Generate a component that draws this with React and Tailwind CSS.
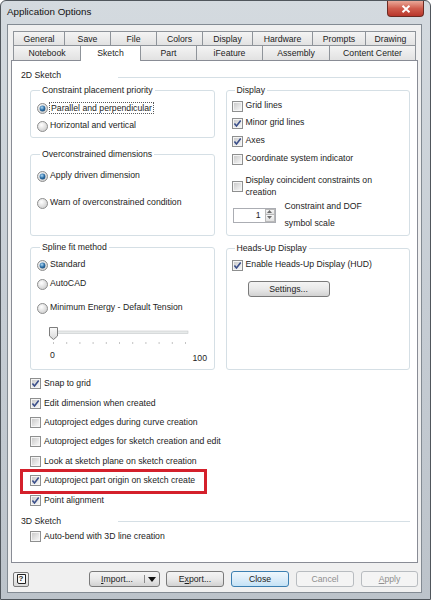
import React from 'react';

const tabsTop = [
  ['General', 'w-[52px]'],
  ['Save', 'w-[47px]'],
  ['File', 'w-[47px]'],
  ['Colors', 'w-[47px]'],
  ['Display', 'w-[51px]'],
  ['Hardware', 'w-[61px]'],
  ['Prompts', 'w-[54px]'],
  ['Drawing', 'w-[51px]'],
];

const tabsBottom = [
  ['Notebook', 'w-[68px]'],
  ['Sketch', 'w-[61px]'],
  ['Part', 'w-[57px]'],
  ['iFeature', 'w-[67px]'],
  ['Assembly', 'w-[68px]'],
  ['Content Center', 'w-[87px]'],
];

const sketchOptions = [
  ['Snap to grid', true],
  ['Edit dimension when created', true],
  ['Autoproject edges during curve creation', false],
  ['Autoproject edges for sketch creation and edit', false],
  ['Look at sketch plane on sketch creation', false],
  ['Autoproject part origin on sketch create', true],
  ['Point alignment', true],
];

function CheckBox({ checked }) {
  return (
    <svg width="11" height="11" viewBox="0 0 11 11" className="shrink-0">
      <defs>
        <linearGradient id="cbfill" x1="0" y1="0" x2="1" y2="1">
          <stop offset="0" stopColor="#cbcbcb" />
          <stop offset="1" stopColor="#f6f6f6" />
        </linearGradient>
      </defs>
      <rect x="0.5" y="0.5" width="10" height="10" fill="#f5f5f5" stroke="#8e8f8f" />
      <rect x="2" y="2" width="7" height="7" fill="url(#cbfill)" />
      {checked && (
        <path d="M2.4 5.4 4.5 8 8.7 2.6" fill="none" stroke="#3b4f8a" strokeWidth="1.6" />
      )}
    </svg>
  );
}

function Radio({ on }) {
  return (
    <svg width="11" height="11" viewBox="0 0 11 11" className="shrink-0">
      <defs>
        <radialGradient id="rdfill" cx="0.4" cy="0.35" r="0.75">
          <stop offset="0" stopColor="#ffffff" />
          <stop offset="1" stopColor="#c9c9c9" />
        </radialGradient>
        <radialGradient id="rddot" cx="0.4" cy="0.35" r="0.75">
          <stop offset="0" stopColor="#b3dcf6" />
          <stop offset="0.55" stopColor="#2e70a8" />
          <stop offset="1" stopColor="#16466f" />
        </radialGradient>
      </defs>
      <circle cx="5.5" cy="5.5" r="5" fill="url(#rdfill)" stroke="#8e8f8f" />
      {on && <circle cx="5.5" cy="5.5" r="2.9" fill="url(#rddot)" />}
    </svg>
  );
}

function Group({ title, className = '', children }) {
  return (
    <div className={`border border-[#d5dfe5] rounded-[3px] ${className}`}>
      <div className="-mt-[7px] ml-[3px] w-fit px-[2px] h-[12px] leading-[12px] bg-white">{title}</div>
      {children}
    </div>
  );
}

function Button({ children, kind = 'normal', className = '' }) {
  const look =
    kind === 'focus'
      ? 'border-[#3c7fb1] bg-linear-to-b from-[#eef7fd] via-[#dcedf9] to-[#c4e2f6]'
      : kind === 'disabled'
        ? 'border-[#b8bcc0] bg-[#f4f4f4] text-[#8f8f8f]'
        : 'border-[#7a7a7a] bg-linear-to-b from-[#f4f4f4] via-[#e9e9e9] to-[#d2d2d2]';
  return (
    <div className={`h-[16px] flex items-center justify-center rounded-[3px] border leading-[14px] ${look} ${className}`}>
      {children}
    </div>
  );
}

function Slider() {
  const ticks = Array.from({ length: 11 }, (_, i) => 8 + i * 13.2);
  return (
    <svg width="150" height="22" viewBox="0 0 150 22" className="ml-[8px] mt-[11px]">
      <defs>
        <linearGradient id="thumb" x1="0" y1="0" x2="0" y2="1">
          <stop offset="0" stopColor="#fbfbfb" />
          <stop offset="1" stopColor="#d8d8d8" />
        </linearGradient>
      </defs>
      <rect x="5" y="6" width="138" height="2.5" fill="#e7eaea" stroke="#c5c8ca" strokeWidth="0.6" />
      {ticks.map((x) => (
        <rect key={x} x={x} y="17" width="1" height="2" fill="#c4c4c4" />
      ))}
      <path d="M4.5 2.5h8v8.5l-4 3.5-4-3.5z" fill="url(#thumb)" stroke="#7d7d7d" />
    </svg>
  );
}

export default function App() {
  return (
    <div className="w-[431px] h-[600px] flex flex-col border border-[#50565c] rounded-t-[6px] bg-linear-to-b from-[#d4dadf] via-[#c6cdd4] to-[#bcc3ca] pl-[6px] pr-[8px] pb-[6px] font-['Liberation_Sans',Arial,sans-serif] text-[8.7px] text-[#1c1c1c]">
      <div className="h-[23px] flex items-start justify-between -mr-[2px]">
        <div className="mt-[5px] text-[9.8px] leading-[12px] text-[#111]">Application Options</div>
        <div className="w-[37px] h-[16px] flex items-center justify-center rounded-b-[4px] border border-t-0 border-[#6b2a22] bg-linear-to-b from-[#e9a899] via-[#cf5c4d] to-[#b8352a]">
          <svg width="10" height="8" viewBox="0 0 10 8">
            <path d="M1.5 0.8 8.5 7.2M8.5 0.8 1.5 7.2" stroke="#ffffff" strokeWidth="1.9" />
          </svg>
        </div>
      </div>

      <div className="flex-1 flex flex-col border border-[#838b93] bg-[#f0f0f0] pt-[6px] pb-[5px]">
        <div className="ml-[5px] flex h-[14px]">
          {tabsTop.map(([label, w], i) => (
            <div
              key={label}
              className={`${w} ${i ? '-ml-px' : ''} h-[14px] flex items-center justify-center border border-b-0 border-[#8f949a] bg-linear-to-b from-[#f4f4f4] to-[#e2e2e2] leading-[12px]`}
            >
              {label}
            </div>
          ))}
        </div>
        <div className="ml-[5px] flex items-start h-[15px]">
          {tabsBottom.map(([label, w], i) => {
            const active = label === 'Sketch';
            return (
              <div
                key={label}
                className={`${w} ${i ? '-ml-px' : ''} ${
                  active
                    ? 'h-[16px] relative z-10 bg-white items-start pt-[1px]'
                    : 'h-[15px] bg-linear-to-b from-[#f4f4f4] to-[#e2e2e2] items-center'
                } flex justify-center border border-b-0 border-[#8f949a] leading-[12px]`}
              >
                {label}
              </div>
            );
          })}
        </div>

        <div className="h-[503px] mx-[3px] bg-white border border-[#898c95] pt-[8px] pl-[9px] pr-[7px]">
          <div className="h-[12px] flex items-center">
            <span className="leading-[12px]">2D Sketch</span>
            <div className="ml-auto mt-[4px] w-[292px] h-px bg-[#d5dfe5]" />
          </div>

          <div className="mt-[9px] ml-[9px] flex gap-[11px]">
            <div className="w-[185px] flex flex-col">
              <Group title="Constraint placement priority" className="h-[48px] pl-[6px]">
                <div className="mt-[6px] h-[12px] flex items-center gap-[2px]">
                  <Radio on />
                  <span className="-ml-[1px] px-[1px] leading-[10px] border border-dotted border-[#5a5a5a]">
                    Parallel and perpendicular
                  </span>
                </div>
                <div className="mt-[6px] h-[12px] flex items-center gap-[2px]">
                  <Radio />
                  <span>Horizontal and vertical</span>
                </div>
              </Group>

              <Group title="Overconstrained dimensions" className="mt-[16px] h-[82px] pl-[6px]">
                <div className="mt-[10px] h-[12px] flex items-center gap-[2px]">
                  <Radio on />
                  <span>Apply driven dimension</span>
                </div>
                <div className="mt-[15px] h-[12px] flex items-center gap-[2px]">
                  <Radio />
                  <span>Warn of overconstrained condition</span>
                </div>
              </Group>

              <Group title="Spline fit method" className="mt-[11px] h-[123px] pl-[6px]">
                <div className="mt-[6px] h-[12px] flex items-center gap-[2px]">
                  <Radio on />
                  <span>Standard</span>
                </div>
                <div className="mt-[7px] h-[12px] flex items-center gap-[2px]">
                  <Radio />
                  <span>AutoCAD</span>
                </div>
                <div className="mt-[12px] h-[12px] flex items-center gap-[2px]">
                  <Radio />
                  <span>Minimum Energy - Default Tension</span>
                </div>
                <Slider />
                <div className="mt-[2px] flex items-start w-[157px] ml-[13px]">
                  <span className="leading-[12px]">0</span>
                  <span className="ml-auto mt-[3px] leading-[12px]">100</span>
                </div>
              </Group>
            </div>

            <div className="w-[185px] flex flex-col">
              <Group title="Display" className="h-[146px] pl-[5px]">
                <div className="mt-[4px] h-[12px] flex items-center gap-[3px]">
                  <CheckBox />
                  <span>Grid lines</span>
                </div>
                <div className="mt-[5px] h-[12px] flex items-center gap-[3px]">
                  <CheckBox checked />
                  <span>Minor grid lines</span>
                </div>
                <div className="mt-[6px] h-[12px] flex items-center gap-[3px]">
                  <CheckBox checked />
                  <span>Axes</span>
                </div>
                <div className="mt-[6px] h-[12px] flex items-center gap-[3px]">
                  <CheckBox />
                  <span>Coordinate system indicator</span>
                </div>
                <div className="mt-[9px] flex items-center gap-[3px]">
                  <CheckBox />
                  <span className="leading-[12px]">
                    Display coincident constraints on
                    <br />
                    creation
                  </span>
                </div>
                <div className="flex items-center ml-[1px]">
                  <div className="flex w-[43px] h-[15px] border border-[#abadb3] bg-white">
                    <div className="flex-1 text-right pr-[4px] leading-[13px]">1</div>
                    <div className="w-[10px] flex flex-col">
                      <div className="h-[6.5px] flex items-center justify-center border border-[#b9b9b9] bg-linear-to-b from-[#f7f7f7] to-[#e0e0e0]">
                        <svg width="5" height="3" viewBox="0 0 5 3">
                          <path d="M0 3 2.5 0 5 3z" fill="#6c6c6c" />
                        </svg>
                      </div>
                      <div className="h-[6.5px] flex items-center justify-center border border-t-0 border-[#b9b9b9] bg-linear-to-b from-[#f7f7f7] to-[#e0e0e0]">
                        <svg width="5" height="3" viewBox="0 0 5 3">
                          <path d="M0 0 2.5 3 5 0z" fill="#6c6c6c" />
                        </svg>
                      </div>
                    </div>
                  </div>
                  <span className="ml-[9px] leading-[17px]">
                    Constraint and DOF
                    <br />
                    symbol scale
                  </span>
                </div>
              </Group>

              <Group title="Heads-Up Display" className="mt-[12px] h-[122px] pl-[5px]">
                <div className="mt-[5px] h-[12px] flex items-center gap-[3px]">
                  <CheckBox checked />
                  <span>Enable Heads-Up Display (HUD)</span>
                </div>
                <Button className="mt-[10px] ml-[16px] w-[82px]">Settings...</Button>
              </Group>
            </div>
          </div>

          <div className="mt-[4px] ml-[9px]">
            {sketchOptions.map(([label, on]) => (
              <div key={label} className="relative h-[19.4px] flex items-center gap-[3px]">
                <CheckBox checked={on} />
                <span>{label}</span>
                {label === 'Autoproject part origin on sketch create' && (
                  <div className="absolute -left-[10px] -top-[2px] w-[187px] h-[25px] border-[3px] border-[#d4202b]" />
                )}
              </div>
            ))}
          </div>

          <div className="mt-[5px] h-[12px] flex items-center">
            <span className="leading-[12px]">3D Sketch</span>
            <div className="ml-auto mt-[1px] w-[292px] h-px bg-[#d5dfe5]" />
          </div>
          <div className="ml-[9px] h-[19.4px] flex items-center gap-[3px]">
            <CheckBox />
            <span>Auto-bend with 3D line creation</span>
          </div>
        </div>

        <div className="mt-[8px] h-[16px] flex items-center pl-[5px] pr-[3px]">
          <div className="w-[16px] h-[15px] flex items-center justify-center rounded-[2px] border border-[#7a7a7a] bg-linear-to-b from-[#f6f6f6] to-[#d9d9d9]">
            <span className="w-[9px] h-[10px] flex items-center justify-center border border-[#222] bg-[#fafafa] rounded-bl-[2px] text-[8px] font-bold leading-[8px]">
              ?
            </span>
          </div>
          <div className="ml-auto flex items-center">
            <div className="w-[71px] h-[16px] flex rounded-[3px] border border-[#7a7a7a] bg-linear-to-b from-[#f4f4f4] via-[#e9e9e9] to-[#d2d2d2]">
              <div className="w-[54px] flex items-center justify-center leading-[14px]">
                <span>
                  <span className="underline">I</span>mport...
                </span>
              </div>
              <div className="my-[3px] w-px bg-[#8a8a8a]" />
              <div className="flex-1 flex items-center justify-center">
                <svg width="8" height="5" viewBox="0 0 8 5">
                  <path d="M0 0h8L4 5z" fill="#111" />
                </svg>
              </div>
            </div>
            <Button className="ml-[6px] w-[58px]">
              <span>
                E<span className="underline">x</span>port...
              </span>
            </Button>
            <Button kind="focus" className="ml-[7px] w-[58px]">
              Close
            </Button>
            <Button kind="disabled" className="ml-[7px] w-[58px]">
              Cancel
            </Button>
            <Button kind="disabled" className="ml-[7px] w-[57px]">
              <span>
                <span className="underline">A</span>pply
              </span>
            </Button>
          </div>
        </div>
      </div>
    </div>
  );
}
